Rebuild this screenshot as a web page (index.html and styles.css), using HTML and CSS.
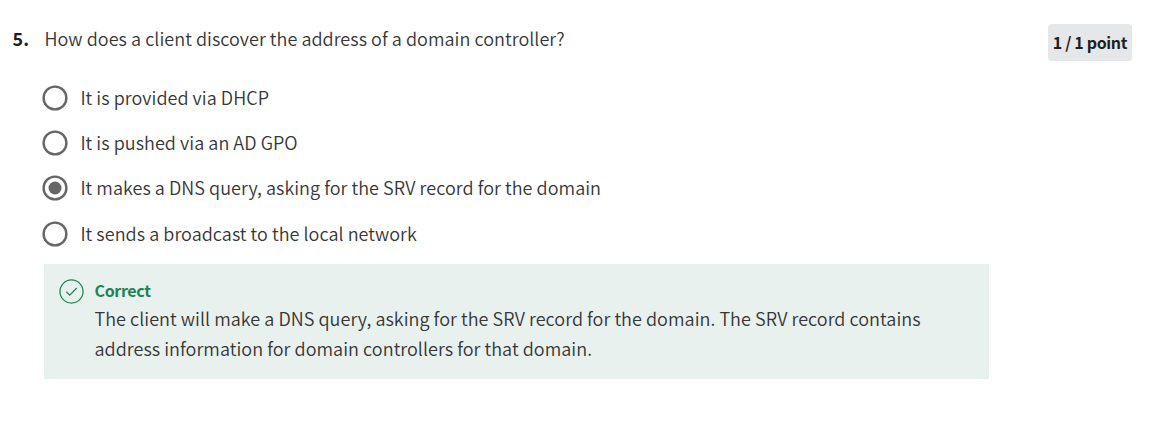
FILE: index.html
```html
<!DOCTYPE html>
<html lang="en">
<head>
<meta charset="utf-8">
<title>Question 5</title>
<link rel="stylesheet" href="styles.css">
</head>
<body>
<main class="question">
  <div class="number">5.</div>
  <div class="content">
    <p class="prompt">How does a client discover the address of a domain controller?</p>
    <div class="options">
      <div class="option"><svg class="radio" viewBox="0 0 26 26"><circle class="ring" cx="13" cy="13" r="11.4"/></svg><span class="label">It is provided via DHCP</span></div>
      <div class="option"><svg class="radio" viewBox="0 0 26 26"><circle class="ring" cx="13" cy="13" r="11.4"/></svg><span class="label">It is pushed via an AD GPO</span></div>
      <div class="option"><svg class="radio" viewBox="0 0 26 26"><circle class="ring" cx="13" cy="13" r="11.4"/><circle class="dot" cx="13" cy="13" r="6.5"/></svg><span class="label">It makes a DNS query, asking for the SRV record for the domain</span></div>
      <div class="option last"><svg class="radio" viewBox="0 0 26 26"><circle class="ring" cx="13" cy="13" r="11.4"/></svg><span class="label">It sends a broadcast to the local network</span></div>
    </div>
    <section class="feedback">
      <svg class="check" viewBox="0 0 24 24" fill="none" stroke="#1f8354"><circle cx="12" cy="12" r="11.1" stroke-width="1.2"/><path d="M7 12.2l3.3 3.3 6.7-6.9" stroke-width="1.2"/></svg>
      <div class="message">
        <h2 class="status">Correct</h2>
        <p class="explain">The client will make a DNS query, asking for the SRV record for the domain. The SRV record contains<br>address information for domain controllers for that domain.</p>
      </div>
    </section>
  </div>
  <div class="points">1 / 1 point</div>
</main>
</body>
</html>
```
FILE: styles.css
```css
* { box-sizing: border-box; }
body {
  margin: 0;
  background: #fff;
  color: #363636;
  font-family: "Noto Sans CJK SC DemiLight", "Noto Sans CJK SC", "Noto Sans", sans-serif;
  font-size: 18px;
  font-weight: 350;
  letter-spacing: 0.042px;
  line-height: 30px;
}
p, h2 { margin: 0; }
.question { display: flex; align-items: flex-start; padding: 24px 27px 0 12px; }
.number, .status, .points { color: #1f1f1f; font-family: "Noto Sans CJK SC", "Noto Sans", sans-serif; font-weight: 700; }
.number { width: 32px; padding-left: 0.5px; line-height: 28px; }
.content { width: 945px; }
.prompt { height: 30px; padding-left: 0.5px; line-height: 28px; }
.options { padding-top: 29px; }
.option { display: flex; align-items: center; gap: 12px; height: 30px; margin-bottom: 15px; }
.option.last { margin: 16px 0 15px; }
.label { height: 30px; line-height: 28px; }
.radio { width: 26px; height: 26px; margin-left: -1.6px; }
.ring { fill: none; stroke: #666; stroke-width: 2.4px; }
.dot { fill: #666; }
.feedback { display: flex; gap: 10.5px; height: 115px; padding: 12px 15px; background: #e8f1ee; }
.check { width: 25px; height: 25px; margin-top: 3px; flex: none; }
.message { white-space: nowrap; }
.status { height: 27px; font-size: 16px; line-height: 28px; letter-spacing: -0.35px; color: #1f8354; }
.points { margin-left: auto; width: 84px; height: 37px; border-radius: 4px; background: #e5e7e8; text-align: center; font-size: 16px; line-height: 37px; letter-spacing: -0.35px; white-space: nowrap; }
```
